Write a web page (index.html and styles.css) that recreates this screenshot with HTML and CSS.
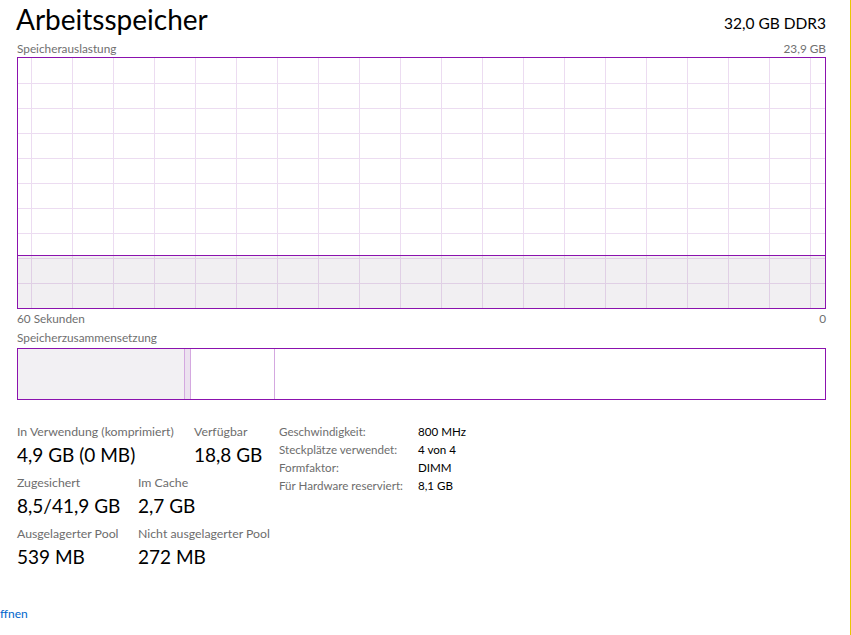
FILE: index.html
```html
<!DOCTYPE html>
<html lang="de">
<head>
<meta charset="utf-8">
<title>Arbeitsspeicher</title>
<link rel="stylesheet" href="styles.css">
</head>
<body>
<div class="page">
  <div class="header">
    <h1 class="title">Arbeitsspeicher</h1>
    <div class="total">32,0 GB DDR3</div>
  </div>
  <div class="axis axis-top">
    <span>Speicherauslastung</span>
    <span>23,9 GB</span>
  </div>
  <div class="graph">
    <div class="usage"></div>
  </div>
  <div class="axis axis-bottom">
    <span>60 Sekunden</span>
    <span>0</span>
  </div>
  <div class="axis axis-comp">
    <span>Speicherzusammensetzung</span>
  </div>
  <div class="composition">
    <div class="seg seg-inuse"></div>
    <div class="seg seg-modified"></div>
    <div class="seg seg-standby"></div>
    <div class="seg seg-free"></div>
  </div>
  <div class="stats">
    <div class="stats-left">
      <div class="stat-row">
        <div class="stat w177">
          <div class="stat-label">In Verwendung (komprimiert)</div>
          <div class="stat-value">4,9 GB (0 MB)</div>
        </div>
        <div class="stat">
          <div class="stat-label">Verfügbar</div>
          <div class="stat-value">18,8 GB</div>
        </div>
      </div>
      <div class="stat-row">
        <div class="stat w121">
          <div class="stat-label">Zugesichert</div>
          <div class="stat-value">8,5/41,9 GB</div>
        </div>
        <div class="stat">
          <div class="stat-label">Im Cache</div>
          <div class="stat-value">2,7 GB</div>
        </div>
      </div>
      <div class="stat-row">
        <div class="stat w121">
          <div class="stat-label">Ausgelagerter Pool</div>
          <div class="stat-value">539 MB</div>
        </div>
        <div class="stat">
          <div class="stat-label">Nicht ausgelagerter Pool</div>
          <div class="stat-value">272 MB</div>
        </div>
      </div>
    </div>
    <div class="props">
      <div class="prop"><span class="prop-key">Geschwindigkeit:</span><span class="prop-val">800 MHz</span></div>
      <div class="prop"><span class="prop-key">Steckplätze verwendet:</span><span class="prop-val">4 von 4</span></div>
      <div class="prop"><span class="prop-key">Formfaktor:</span><span class="prop-val">DIMM</span></div>
      <div class="prop"><span class="prop-key">Für Hardware reserviert:</span><span class="prop-val">8,1 GB</span></div>
    </div>
  </div>
  <a class="link" href="#">ffnen</a>
</div>
<div class="edge"></div>
</body>
</html>
```

FILE: styles.css
```css
* { box-sizing: border-box; }
html, body { margin: 0; padding: 0; background: #fff; }
body {
  width: 851px;
  height: 635px;
  overflow: hidden;
  font-family: "Lato", "Open Sans", sans-serif;
  color: #000;
  position: relative;
}
.page {
  padding-left: 17px;
  width: 826px;
}
.header {
  height: 40px;
  display: flex;
  justify-content: space-between;
  align-items: flex-start;
}
.title {
  margin: 0 0 0 -1px;
  font-weight: 400;
  font-size: 28px;
  line-height: 38px;
}
.total {
  font-size: 15.5px;
  line-height: 20px;
  padding-top: 13px;
}
.axis {
  display: flex;
  justify-content: space-between;
  font-size: 11.8px;
  color: #6f6f6f;
}
.axis-top { height: 17px; line-height: 17px; }
.axis-bottom { height: 19px; line-height: 19px; }
.axis-comp { height: 20px; line-height: 20px; }
.graph {
  position: relative;
  width: 809px;
  height: 252px;
  border: 1px solid #8b12ae;
  background-color: #fff;
  background-image:
    repeating-linear-gradient(to bottom, transparent 0 24px, #ecdcf1 24px 25px),
    linear-gradient(to right, transparent 40px, #ecdcf1 40px);
  background-size: 100% 225px, 41px 100%;
  background-repeat: no-repeat, repeat;
  background-position: 0 1px, 14px 0;
}
.usage {
  position: absolute;
  left: 0;
  right: 0;
  bottom: 0;
  height: 53px;
  border-top: 1px solid #8b12ae;
  background: rgba(120, 100, 130, 0.1);
}
.composition {
  display: flex;
  width: 809px;
  height: 52px;
  border: 1px solid #8b12ae;
}
.seg { height: 100%; }
.seg-inuse { width: 167px; background: #f2f0f3; border-right: 1px solid #d4a8e0; }
.seg-modified { width: 6px; background: #ece2ef; border-right: 1px solid #d4a8e0; }
.seg-standby { width: 84px; border-right: 1px solid #d4a8e0; }
.seg-free { flex: 1; }
.stats {
  display: flex;
  margin-top: 24px;
}
.stats-left { width: 262px; }
.stat-row {
  display: flex;
  margin-bottom: 6px;
}
.w177 { width: 177px; }
.w121 { width: 121px; }
.stat-label {
  font-size: 12.3px;
  line-height: 16px;
  color: #6d6d6d;
}
.stat-value {
  font-size: 19px;
  line-height: 29px;
}
.props { margin-top: -1px; }
.prop {
  display: flex;
  font-size: 11.6px;
  line-height: 18px;
}
.prop-key { width: 139px; color: #6d6d6d; }
.prop-val { color: #000; }
.link {
  display: block;
  margin-left: -17px;
  margin-top: 28px;
  font-size: 12px;
  line-height: 18px;
  color: #0066cc;
  text-decoration: none;
}
.edge {
  position: absolute;
  top: 0;
  right: 0;
  width: 1px;
  height: 635px;
  background: #e8c800;
}
```
